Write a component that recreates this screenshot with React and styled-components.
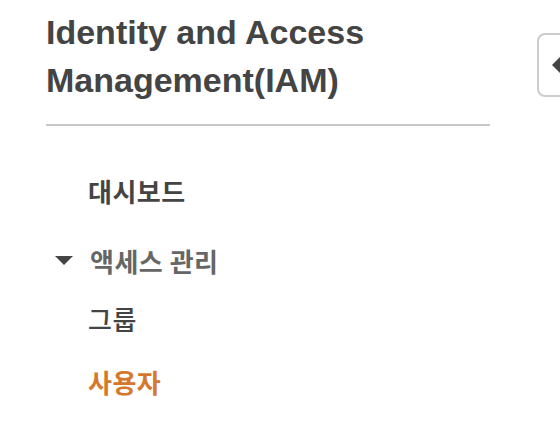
import styled, { createGlobalStyle } from 'styled-components';

const GlobalStyle = createGlobalStyle`
  html, body {
    margin: 0;
    padding: 0;
    background: #ffffff;
    overflow: hidden;
  }
`;

const Page = styled.div`
  display: flex;
  align-items: flex-start;
  width: 560px;
  height: 422px;
  overflow: hidden;
`;

const Sidebar = styled.nav`
  flex: 0 0 auto;
  width: 444px;
  padding: 8px 47px 0 46px;
`;

const Title = styled.h1`
  margin: 0;
  font-family: "Liberation Sans", Arial, sans-serif;
  font-size: 34px;
  line-height: 48px;
  font-weight: 700;
  color: #444444;
`;

const Divider = styled.hr`
  margin: 20px 0 0;
  border: none;
  height: 2px;
  background: #c8c8c8;
`;

const NavList = styled.ul`
  list-style: none;
  margin: 0;
  padding: 0;
`;

const NavItem = styled.li`
  display: flex;
  align-items: center;
  height: 32px;
  margin-top: ${(p) => p.$gap}px;
  padding-left: ${(p) => (p.$caret ? 9 : 42)}px;
  font-family: "Noto Sans CJK KR", "Noto Sans", sans-serif;
  font-size: 26px;
  letter-spacing: 0.5px;
  font-weight: ${(p) => (p.$light ? 500 : 700)};
  color: ${(p) => p.$color || '#444444'};
`;

const Caret = styled.svg`
  width: 18px;
  height: 9px;
  margin-right: 17px;
  fill: #444444;
`;

const ToggleColumn = styled.div`
  padding-top: 33px;
`;

const ToggleButton = styled.button`
  display: flex;
  align-items: center;
  justify-content: center;
  width: 40px;
  height: 64px;
  padding: 0;
  box-sizing: border-box;
  border: 2px solid #cccccc;
  border-radius: 8px;
  background: #ffffff;
  cursor: pointer;
`;

export default function App() {
  return (
    <>
      <GlobalStyle />
      <Page>
        <Sidebar>
          <Title>Identity and Access Management(IAM)</Title>
          <Divider />
          <NavList>
            <NavItem $gap={48}>대시보드</NavItem>
            <NavItem $gap={38} $caret $color="#666666">
              <Caret viewBox="0 0 18 9">
                <polygon points="0,0 18,0 9,9" />
              </Caret>
              액세스 관리
            </NavItem>
            <NavItem $gap={26} $light>그룹</NavItem>
            <NavItem $gap={31} $color="#d5772c">사용자</NavItem>
          </NavList>
        </Sidebar>
        <ToggleColumn>
          <ToggleButton aria-label="Collapse">
            <svg width="10" height="20" viewBox="0 0 10 20">
              <polygon points="10,0 10,20 0,10" fill="#444444" />
            </svg>
          </ToggleButton>
        </ToggleColumn>
      </Page>
    </>
  );
}
